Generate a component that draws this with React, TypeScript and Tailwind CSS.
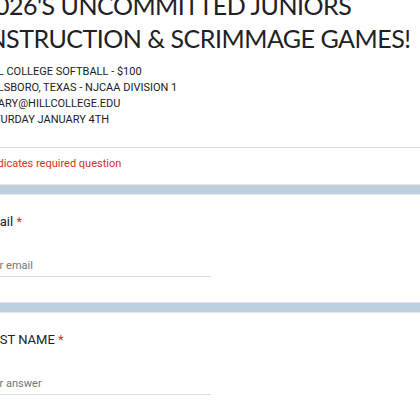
import React from 'react'

function Question({ label, placeholder }: { label: string; placeholder: string }) {
  return (
    <div className="bg-white border-y border-[#e3e6ea] pt-[17px] pb-[25px]">
      <div className="text-[13px] leading-[20px] text-[#202124]">
        {label} <span className="text-[#d93025]">*</span>
      </div>
      <div className="mt-[26px] w-[230px] border-b border-[#dadce0] pb-[2px] text-[11px] leading-[16px] text-[#70757a]">
        {placeholder}
      </div>
    </div>
  )
}

export default function App() {
  return (
    <div className="w-[420px] h-[420px] overflow-hidden bg-[#bccfde] font-['Roboto',sans-serif]">
      <div className="ml-[-19px] w-[480px] mt-[-11px] flex flex-col gap-[9px]">
        <div className="bg-white border-b border-[#e3e6ea]">
          <div className="text-[25px] leading-[33px] text-[#202124] font-['Lato',sans-serif] whitespace-nowrap tracking-[-0.5px]">
            2026&apos;S UNCOMMITTED JUNIORS
            <br />
            INSTRUCTION &amp; SCRIMMAGE GAMES!
          </div>
          <div className="mt-[9px] text-[11px] leading-[16px] text-[#202124]">
            <div>HILL COLLEGE SOFTBALL - $100</div>
            <div>HILLSBORO, TEXAS - NJCAA DIVISION 1</div>
            <div>CMARY@HILLCOLLEGE.EDU</div>
            <div>SATURDAY JANUARY 4TH</div>
          </div>
          <div className="mt-[19px] border-t border-[#dadce0]" />
          <div className="pt-[8px] pb-[12px] text-[11px] leading-[16px] text-[#d93025]">
            * Indicates required question
          </div>
        </div>
        <Question label="Email" placeholder="Your email" />
        <Question label="FIRST NAME" placeholder="Your answer" />
      </div>
    </div>
  )
}
